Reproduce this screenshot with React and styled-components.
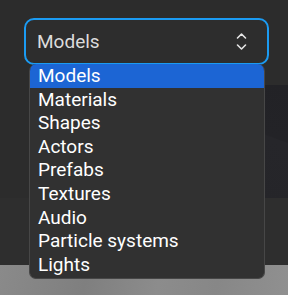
import React from "react";
import styled, { createGlobalStyle } from "styled-components";

const GlobalStyle = createGlobalStyle`
  html, body { margin: 0; padding: 0; background: #2c2c2c; }
  body { font-family: Roboto, "Noto Sans", sans-serif; }
`;

const Page = styled.div`
  position: relative;
  width: 288px;
  height: 295px;
  overflow: hidden;
  display: flex;
  flex-direction: column;
  background: #2c2c2c;
`;

const TopArea = styled.div`
  height: 85px;
  padding: 18px 19px 0 24px;
  box-sizing: border-box;
  position: relative;
  z-index: 2;
`;

const MidRow = styled.div`
  height: 113px;
  display: flex;
  justify-content: flex-end;
`;

const DarkPanel = styled.div`
  width: 40px;
  background: linear-gradient(200deg, #222226 0%, #232327 45%, #26262a 46%, #252529 100%);
`;

const Spacer = styled.div`
  flex: 1;
  background: #2e2e2e;
`;

const Floor = styled.div`
  height: 30px;
  background: linear-gradient(100deg, #8a8a8a 0%, #7f7f7f 30%, #8c8c8c 55%, #878787 75%, #909090 100%);
`;

const SelectField = styled.div`
  position: relative;
  width: 245px;
  height: 47px;
  box-sizing: border-box;
  border: 2px solid #1b9bf2;
  border-radius: 10px;
  background: #2d2d2d;
  display: flex;
  align-items: center;
  justify-content: space-between;
  padding: 0 20px 0 11px;
`;

const Value = styled.span`
  font-family: Roboto, sans-serif;
  font-size: 19px;
  color: #dcdcdc;
  font-weight: 400;
`;

const Listbox = styled.ul`
  position: absolute;
  top: 44px;
  left: 3px;
  width: 236px;
  box-sizing: border-box;
  margin: 0;
  padding: 0 0 2px;
  list-style: none;
  background: #313131;
  border: 1px solid #474747;
  border-top: none;
  border-radius: 7px;
  overflow: hidden;
`;

const Option = styled.li`
  height: 23.6px;
  line-height: 23.6px;
  padding-left: 8px;
  font-family: Roboto, sans-serif;
  font-size: 19px;
  color: #ffffff;
  background: ${(p) => (p.$selected ? "#1c65d4" : "transparent")};
  white-space: nowrap;
`;

const Chevrons = () => (
  <svg width="11" height="19" viewBox="0 0 11 19" fill="none" stroke="#e6e6e6" strokeWidth="1.6" strokeLinecap="round" strokeLinejoin="round">
    <path d="M1.5 6 L5.5 2 L9.5 6" />
    <path d="M1.5 13 L5.5 17 L9.5 13" />
  </svg>
);

const items = ["Models", "Materials", "Shapes", "Actors", "Prefabs", "Textures", "Audio", "Particle systems", "Lights"];

export default function App() {
  return (
    <>
      <GlobalStyle />
      <Page>
        <TopArea>
          <SelectField>
            <Value>Models</Value>
            <Chevrons />
            <Listbox>
              {items.map((it, i) => (
                <Option key={it} $selected={i === 0}>{it}</Option>
              ))}
            </Listbox>
          </SelectField>
        </TopArea>
        <MidRow>
          <DarkPanel />
        </MidRow>
        <Spacer />
        <Floor />
      </Page>
    </>
  );
}
